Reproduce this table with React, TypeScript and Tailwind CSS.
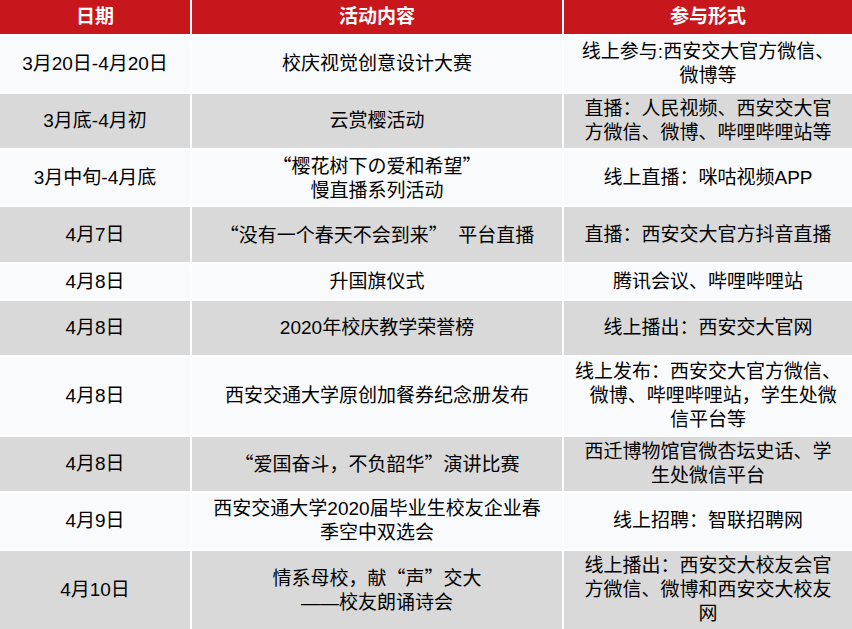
import React from "react";

type Row = { date: string; title: string[]; form: string[]; gray: boolean };

const rows: Row[] = [
  { date: "3月20日-4月20日", title: ["校庆视觉创意设计大赛"], form: ["线上参与:西安交大官方微信、", "微博等"], gray: false },
  { date: "3月底-4月初", title: ["云赏樱活动"], form: ["直播：人民视频、西安交大官", "方微信、微博、哔哩哔哩站等"], gray: true },
  { date: "3月中旬-4月底", title: ["“樱花树下の爱和希望”", "慢直播系列活动"], form: ["线上直播：咪咕视频APP"], gray: false },
  { date: "4月7日", title: ["“没有一个春天不会到来”\u00a0\u00a0平台直播"], form: ["直播：西安交大官方抖音直播"], gray: true },
  { date: "4月8日", title: ["升国旗仪式"], form: ["腾讯会议、哔哩哔哩站"], gray: false },
  { date: "4月8日", title: ["2020年校庆教学荣誉榜"], form: ["线上播出：西安交大官网"], gray: true },
  { date: "4月8日", title: ["西安交通大学原创加餐券纪念册发布"], form: ["线上发布：西安交大官方微信、", "\u00a0\u00a0微博、哔哩哔哩站，学生处微", "信平台等"], gray: false },
  { date: "4月8日", title: ["“爱国奋斗，不负韶华”演讲比赛"], form: ["西迁博物馆官微杏坛史话、学", "生处微信平台"], gray: true },
  { date: "4月9日", title: ["西安交通大学2020届毕业生校友企业春", "季空中双选会"], form: ["线上招聘：智联招聘网"], gray: false },
  { date: "4月10日", title: ["情系母校，献“声”交大", "——校友朗诵诗会"], form: ["线上播出：西安交大校友会官", "方微信、微博和西安交大校友", "网"], gray: true },
];

// quotes are drawn full width in the reference, so take them from the CJK font
const withQuotes = (s: string) =>
  s.split(/([“”])/).map((part, i) =>
    part === "“" || part === "”" ? (
      <span key={i} className="font-['Noto_Sans_CJK_SC',sans-serif]">
        {part}
      </span>
    ) : (
      part
    )
  );

const Cell = ({ lines, gray }: { lines: string[]; gray: boolean }) => (
  <div
    className={`flex flex-col items-center justify-center text-center whitespace-nowrap text-black ${
      gray ? "bg-[#d9d9d9]" : "bg-[#f9fafc]"
    }`}
  >
    {lines.map((l, i) => (
      <span key={i}>{withQuotes(l)}</span>
    ))}
  </div>
);

export default function App() {
  return (
    <div className="w-[852px] h-[629px] bg-white grid grid-cols-[190px_370px_288px] grid-rows-[34px_56px_54px_55px_55px_35px_54px_78px_54px_56px_78px] gap-[2px] text-[19px] leading-[24px] overflow-hidden font-['Liberation_Sans','Noto_Sans_CJK_SC',sans-serif]">
      {["日期", "活动内容", "参与形式"].map((h) => (
        <div key={h} className="bg-[#c8161d] text-white font-bold flex items-center justify-center">
          {h}
        </div>
      ))}
      {rows.map((r, i) => (
        <React.Fragment key={i}>
          <Cell lines={[r.date]} gray={r.gray} />
          <Cell lines={r.title} gray={r.gray} />
          <Cell lines={r.form} gray={r.gray} />
        </React.Fragment>
      ))}
    </div>
  );
}
